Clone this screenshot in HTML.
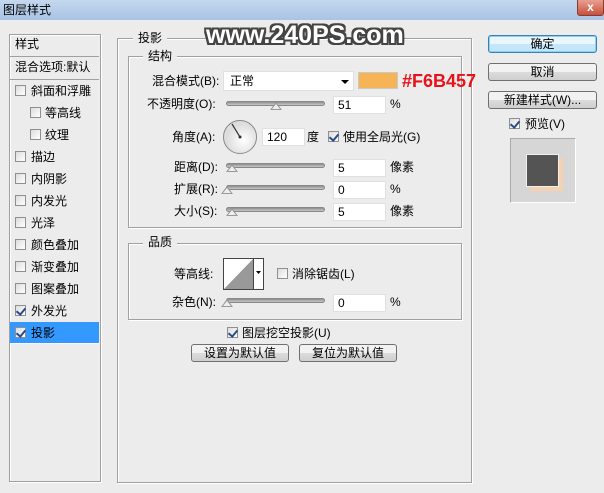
<!DOCTYPE html>
<html><head><meta charset="utf-8"><style>
*{margin:0;padding:0;box-sizing:border-box}
body{width:604px;height:493px;background:#ececec;font-family:"Liberation Sans","Noto Sans CJK SC",sans-serif;font-size:12px;color:#000;position:relative;overflow:hidden}
.a{position:absolute;white-space:nowrap;line-height:14px}
.title{position:absolute;left:0;top:0;width:604px;height:20px;background:linear-gradient(#c4d8ee,#a9c4e4);}
.close{position:absolute;left:577px;top:0;width:27px;height:16px;background:linear-gradient(#e8a090,#c7503c);border:1px solid #8a3a2e;border-top:none;border-radius:0 0 3px 3px;color:#fff;font-weight:bold;text-align:center;font-size:12px;line-height:14px}
.box{position:absolute;border:1px solid #a0a0a0;box-shadow:1px 1px 0 #fff inset,1px 1px 0 #fff}
.leg{position:absolute;background:#ececec;padding:0 5px;line-height:14px}
.cb{position:absolute;width:11px;height:11px;border:1px solid #8e8f8f;background:linear-gradient(135deg,#dcdcdc,#fff)}
.cb.on::after{content:"";position:absolute;left:2px;top:0px;width:4px;height:7px;border:solid #2a4a8a;border-width:0 2px 2px 0;transform:rotate(40deg)}
.row{position:absolute;left:10px;width:89px;height:22px;border-bottom:1px solid #fff;}
.inp{position:absolute;height:18px;background:#fff;border:1px solid #e0e0e0;padding-left:4px;line-height:17px}
.sl{position:absolute;height:5px;border-radius:3px;background:linear-gradient(#8e8e8e,#c8c8c8);border:1px solid #888}
.th{position:absolute;width:0;height:0;border-left:6px solid transparent;border-right:6px solid transparent;border-bottom:8px solid #999}
.th::after{content:"";position:absolute;left:-4px;top:2px;border-left:4px solid transparent;border-right:4px solid transparent;border-bottom:5px solid #eee}
.btn{position:absolute;height:18px;border:1px solid #707070;border-radius:3px;background:linear-gradient(#f2f2f2 50%,#dcdcdc 50%,#cfcfcf);text-align:center;line-height:16px}
</style></head><body>
<div class="title"></div>
<div class="a" style="left:3px;top:3px">图层样式</div>
<div class="close">x</div>

<div class="box" style="left:9px;top:34px;width:92px;height:448px;background:#ececec"></div>
<div class="row" style="top:35px;height:22px;border-bottom:1px solid #a0a0a0"></div>
<div class="a" style="left:15px;top:37px">样式</div>
<div class="row" style="top:57px;height:23px;border-bottom:1px solid #a0a0a0"></div>
<div class="a" style="left:15px;top:60px">混合选项:默认</div>
<div class="row" style="top:322px;height:22px;background:#3399ff"></div>

<div class="cb" style="left:15px;top:85px"></div><div class="a" style="left:31px;top:84px">斜面和浮雕</div>
<div class="cb" style="left:30px;top:107px"></div><div class="a" style="left:45px;top:106px">等高线</div>
<div class="cb" style="left:30px;top:129px"></div><div class="a" style="left:45px;top:128px">纹理</div>
<div class="cb" style="left:15px;top:151px"></div><div class="a" style="left:31px;top:150px">描边</div>
<div class="cb" style="left:15px;top:173px"></div><div class="a" style="left:31px;top:172px">内阴影</div>
<div class="cb" style="left:15px;top:195px"></div><div class="a" style="left:31px;top:194px">内发光</div>
<div class="cb" style="left:15px;top:217px"></div><div class="a" style="left:31px;top:216px">光泽</div>
<div class="cb" style="left:15px;top:239px"></div><div class="a" style="left:31px;top:238px">颜色叠加</div>
<div class="cb" style="left:15px;top:261px"></div><div class="a" style="left:31px;top:260px">渐变叠加</div>
<div class="cb" style="left:15px;top:283px"></div><div class="a" style="left:31px;top:282px">图案叠加</div>
<div class="cb on" style="left:15px;top:305px"></div><div class="a" style="left:31px;top:304px">外发光</div>
<div class="cb on" style="left:15px;top:327px"></div><div class="a" style="left:31px;top:326px">投影</div>

<div class="box" style="left:117px;top:38px;width:355px;height:445px"></div>
<div class="leg" style="left:133px;top:31px">投影</div>
<div class="box" style="left:128px;top:56px;width:334px;height:172px"></div>
<div class="leg" style="left:143px;top:49px">结构</div>
<div class="a" style="left:206px;top:20px;font-size:25px;line-height:30px;font-weight:bold;color:#fff;font-family:'Liberation Sans',sans-serif;text-shadow:2px 0 #444,-2px 0 #444,0 2px #444,0 -2px #444,2px 2px #444,-2px -2px #444,2px -2px #444,-2px 2px #444">www.240PS.com</div>

<div class="a" style="left:152px;top:74px">混合模式(B):</div>
<div class="inp" style="left:223px;top:71px;width:131px;height:20px;padding-left:6px;line-height:19px">正常<span style="position:absolute;right:4px;top:8px;border-left:4px solid transparent;border-right:4px solid transparent;border-top:4px solid #000"></span></div>
<div style="position:absolute;left:358px;top:72px;width:40px;height:17px;background:#f6b457;border:1px solid #c9c9c9"></div>
<div class="a" style="left:402px;top:70px;font-size:18px;line-height:22px;font-weight:bold;color:#e8121a">#F6B457</div>

<div class="a" style="left:147px;top:97px">不透明度(O):</div>
<div class="sl" style="left:226px;top:101px;width:99px"></div><div class="th" style="left:270px;top:102px"></div>
<div class="inp" style="left:333px;top:96px;width:53px">51</div><div class="a" style="left:390px;top:97px">%</div>

<div class="a" style="left:172px;top:130px">角度(A):</div>
<svg style="position:absolute;left:222px;top:119px" width="36" height="36"><defs><radialGradient id="g" cx="0.6" cy="0.6"><stop offset="0" stop-color="#fff"/><stop offset="1" stop-color="#ddd"/></radialGradient></defs><circle cx="18" cy="18" r="16.5" fill="url(#g)" stroke="#888"/><line x1="18" y1="18" x2="10" y2="5" stroke="#333" stroke-width="1.2"/><circle cx="18" cy="18" r="1.5" fill="#333"/></svg>
<div class="inp" style="left:262px;top:128px;width:43px">120</div><div class="a" style="left:307px;top:130px">度</div>
<div class="cb on" style="left:328px;top:131px"></div><div class="a" style="left:343px;top:130px">使用全局光(G)</div>

<div class="a" style="left:174px;top:160px">距离(D):</div>
<div class="sl" style="left:226px;top:163px;width:99px"></div><div class="th" style="left:226px;top:164px"></div>
<div class="inp" style="left:333px;top:159px;width:53px">5</div><div class="a" style="left:390px;top:160px">像素</div>

<div class="a" style="left:174px;top:182px">扩展(R):</div>
<div class="sl" style="left:226px;top:185px;width:99px"></div><div class="th" style="left:221px;top:186px"></div>
<div class="inp" style="left:333px;top:181px;width:53px">0</div><div class="a" style="left:390px;top:182px">%</div>

<div class="a" style="left:174px;top:204px">大小(S):</div>
<div class="sl" style="left:226px;top:207px;width:99px"></div><div class="th" style="left:226px;top:208px"></div>
<div class="inp" style="left:333px;top:203px;width:53px">5</div><div class="a" style="left:390px;top:204px">像素</div>

<div class="box" style="left:128px;top:243px;width:334px;height:77px"></div>
<div class="leg" style="left:143px;top:235px">品质</div>
<div class="a" style="left:174px;top:267px">等高线:</div>
<svg style="position:absolute;left:223px;top:258px" width="41" height="32"><rect x="0.5" y="0.5" width="40" height="31" fill="#fff" stroke="#444"/><polygon points="1,31 30,1 30,31" fill="#999"/><line x1="30.5" y1="0" x2="30.5" y2="32" stroke="#444"/><polygon points="33,13 38,13 35.5,16" fill="#000"/></svg>
<div class="cb" style="left:277px;top:268px"></div><div class="a" style="left:292px;top:267px">消除锯齿(L)</div>
<div class="a" style="left:172px;top:295px">杂色(N):</div>
<div class="sl" style="left:226px;top:298px;width:99px"></div><div class="th" style="left:221px;top:299px"></div>
<div class="inp" style="left:333px;top:294px;width:53px">0</div><div class="a" style="left:390px;top:295px">%</div>

<div class="cb on" style="left:227px;top:327px"></div><div class="a" style="left:242px;top:326px">图层挖空投影(U)</div>
<div class="btn" style="left:191px;top:344px;width:98px">设置为默认值</div>
<div class="btn" style="left:299px;top:344px;width:98px">复位为默认值</div>

<div class="btn" style="left:488px;top:35px;width:109px;border-color:#3c7fb1;box-shadow:0 0 0 1px #8fd0f0 inset;background:linear-gradient(#eaf6fd 50%,#c8e6f7 50%,#bee6fd)">确定</div>
<div class="btn" style="left:488px;top:63px;width:109px">取消</div>
<div class="btn" style="left:488px;top:91px;width:109px">新建样式(W)...</div>
<div class="cb on" style="left:509px;top:118px"></div><div class="a" style="left:525px;top:117px">预览(V)</div>
<div style="position:absolute;left:510px;top:138px;width:66px;height:65px;background:#d6d6d6;border:1px solid #aaa;border-bottom-color:#fff;border-right-color:#fff"></div>
<div style="position:absolute;left:530px;top:158px;width:33px;height:33px;background:#f6d2b0;filter:blur(1px)"></div>
<div style="position:absolute;left:526px;top:154px;width:33px;height:33px;background:#545454;border:1px solid #f0f0f0"></div>
</body></html>
